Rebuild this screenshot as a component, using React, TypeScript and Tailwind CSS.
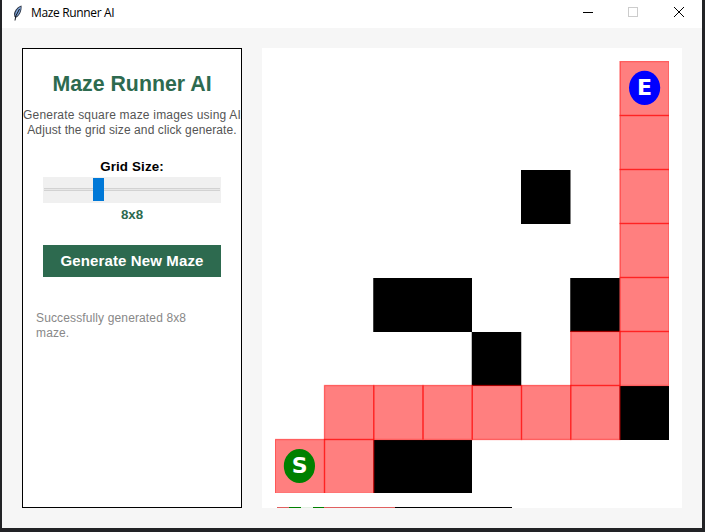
const CELL_W = 49.25;
const CELL_H = 54;

// [column, row, columns spanned] of each wall in the 8x8 grid
const walls = [[5, 2, 1], [2, 4, 2], [6, 4, 1], [4, 5, 1], [7, 6, 1], [2, 7, 2]];
// [column, row] of each square on the solution path
const path = [
  [7, 0], [7, 1], [7, 2], [7, 3], [7, 4], [7, 5], [6, 5], [6, 6],
  [5, 6], [4, 6], [3, 6], [2, 6], [1, 6], [1, 7], [0, 7],
];

function Feather() {
  return (
    <svg className="h-4 w-3" viewBox="0 0 12 16">
      <path d="M9.500 .5C6 1.500 2.500 5 2 9L2.500 12L4.500 12.500C8 10 10 5.500 9.500 .5Z" fill="#28303f" />
      <path d="M8.800 1.500C5.500 3 3.200 6 3 10.500L4.500 11.500C7.500 9 9 5 8.800 1.500Z" fill="#7fa3d6" />
      <path d="M7.500 4L3.800 11L3 15.500" fill="none" stroke="#10141c" strokeWidth="1" />
    </svg>
  );
}

function TitleBar() {
  return (
    <header className="flex h-7 shrink-0 items-start bg-white pl-[10px]">
      <div className="flex h-[25px] flex-1 items-center gap-[7px]">
        <Feather />
        <span className="pt-px font-['Open_Sans','Noto_Sans',sans-serif] text-[12px] leading-4 tracking-[-0.35px] text-black">Maze Runner AI</span>
      </div>
      <svg className="h-[25px] w-[120px]" viewBox="0 0 120 25" fill="none" shapeRendering="crispEdges">
        <path d="M1 12.500H11" stroke="#000" />
        <rect x="46.500" y="7.500" width="9" height="9" stroke="#ccc" />
        <path d="M92 7L102 17M102 7L92 17" stroke="#000" shapeRendering="auto" />
      </svg>
    </header>
  );
}

function Slider() {
  return (
    <div className="flex h-[26px] w-[178px] items-start bg-[#f0f0f0] px-px pt-[11px]">
      <div className="flex h-[3px] flex-1 items-center border-y border-[#d2d2d2] bg-[#e7e7e7]">
        <div className="ml-[49px] h-[23px] w-[11px] shrink-0 bg-[#0078d7]" />
      </div>
    </div>
  );
}

function Controls() {
  return (
    <aside className="flex h-[460px] w-[220px] shrink-0 flex-col items-center border border-black bg-white">
      <h1 className="mt-[22px] text-[21.330px] leading-[26px] font-bold whitespace-nowrap text-[#2d6a4f]">Maze Runner AI</h1>
      <p className="mt-[11px] text-center text-[12px] leading-[15px] whitespace-nowrap text-[#555]">
        <span className="tracking-[0.2px]">Generate square maze images using AI</span><br />
        <span className="tracking-[0.1px]">Adjust the grid size and click generate.</span>
      </p>
      <div className="mt-[21px] text-[13.330px] leading-4 font-bold tracking-[0.15px] text-black">Grid Size:</div>
      <div className="mt-[2px]"><Slider /></div>
      <div className="mt-[4px] text-[13.330px] leading-4 font-bold text-[#2d6a4f]">8x8</div>
      <button className="mt-[22px] h-8 w-[178px] bg-[#2d6a4f] text-[15px] font-bold tracking-[0.12px] whitespace-nowrap text-white">Generate New Maze</button>
      <p className="mt-[34px] w-full pl-[13px] text-[12px] leading-[15px] tracking-[0.13px] text-[#888]">
        Successfully generated 8x8<br />maze.
      </p>
    </aside>
  );
}

function Maze() {
  return (
    <svg className="h-[460px] w-[420px] shrink-0 bg-white" viewBox="0 0 420 460">
      <defs><clipPath id="grid"><rect x="13" y="13" width="394" height="432" /></clipPath></defs>
      <g clipPath="url(#grid)">
        <g transform="translate(13 13)">
          {walls.map(([c, r, span]) => (
            <rect key={`${c}-${r}`} x={c * CELL_W - 0.25} y={r * CELL_H + 1} width={span * CELL_W + 0.25} height={CELL_H} fill="#000" />
          ))}
          {path.map(([c, r]) => (
            <rect key={`${c}-${r}`} x={c * CELL_W + 0.25} y={r * CELL_H + 0.5} width={CELL_W} height={CELL_H} fill="#f00" fillOpacity="0.5" stroke="#f00" strokeOpacity="0.5" strokeWidth="1.300" />
          ))}
        </g>
      </g>
      <ellipse cx="382.600" cy="39.800" rx="15.600" ry="17.100" fill="#00f" />
      <ellipse cx="37.400" cy="418" rx="15.600" ry="17.100" fill="#008000" />
      <g fill="#fff" textAnchor="middle" className="font-['DejaVu_Sans',sans-serif] text-[22px] font-bold">
        <text x="382.500" y="47">E</text>
        <text x="37.800" y="425">S</text>
      </g>
      <g shapeRendering="crispEdges">
        <rect x="15" y="459" width="118" height="1" fill="#e06060" />
        <rect x="27" y="459" width="35" height="1" fill="#008000" />
        <rect x="39" y="459" width="12" height="1" fill="#e4f2e4" />
        <rect x="133" y="459" width="117" height="1" fill="#000" />
      </g>
    </svg>
  );
}

export default function App() {
  return (
    <div className="h-[532px] w-[705px] overflow-hidden bg-[#222326] pr-[3px] pb-1 pl-[2px] font-['Liberation_Sans',Arial,sans-serif]">
      <div className="flex h-[528px] w-[700px] flex-col bg-[#f6f6f6]">
        <TitleBar />
        <main className="flex gap-5 p-5">
          <Controls />
          <Maze />
        </main>
      </div>
    </div>
  );
}
